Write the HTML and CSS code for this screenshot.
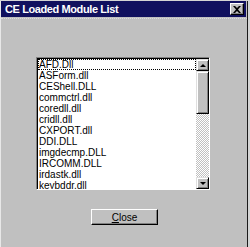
FILE: index.html
```html
<!DOCTYPE html>
<html>
<head>
    <meta charset="UTF-8">
    <link rel="stylesheet" href="styles.css">
</head>
<body>
    <div class="window">
        <div class="titlebar">
            <span class="title">CE Loaded Module List</span>
            <button class="close-box">
                <svg viewBox="0 0 8 7" width="8" height="7">
                    <path d="M0 0h2l2 2 2-2h2L5 3.5 8 7H6L4 5 2 7H0l3-3.5z" fill="#000"/>
                </svg>
            </button>
        </div>

        <div class="content">
            <div class="listbox">
                <div class="items">
                    <div class="item focused">AFD.Dll</div>
                    <div class="item">ASForm.dll</div>
                    <div class="item">CEShell.DLL</div>
                    <div class="item">commctrl.dll</div>
                    <div class="item">coredll.dll</div>
                    <div class="item">cridll.dll</div>
                    <div class="item">CXPORT.dll</div>
                    <div class="item">DDI.DLL</div>
                    <div class="item">imgdecmp.DLL</div>
                    <div class="item">IRCOMM.DLL</div>
                    <div class="item">irdastk.dll</div>
                    <div class="item">keybddr.dll</div>
                </div>
                <div class="scrollbar">
                    <div class="sb-btn"><span class="arrow-up"></span></div>
                    <div class="sb-thumb"></div>
                    <div class="sb-track"></div>
                    <div class="sb-btn"><span class="arrow-down"></span></div>
                </div>
            </div>

            <button class="button"><u>C</u>lose</button>
        </div>
    </div>
</body>
</html>
```

FILE: styles.css
```css
body {
    margin: 0;
    width: 250px;
    height: 247px;
    overflow: hidden;
    background: #d4d4d4;
    font-family: "Liberation Sans", Arial, sans-serif;
    color: #000;
}

.window {
    width: 248px;
    height: 247px;
    box-sizing: border-box;
    background: #c0c0c0;
    border-left: 1px solid #e8e8e8;
    border-right: 1px solid #1a1a1a;
}

.titlebar {
    height: 16px;
    margin: 1px 1px 0 0;
    padding: 0 2px 0 4px;
    background: #10105e;
    display: flex;
    align-items: center;
    justify-content: space-between;
}

.title {
    color: #fff;
    font-size: 11px;
    font-weight: bold;
    letter-spacing: -0.4px;
}

.close-box {
    width: 14px;
    height: 12px;
    padding: 0;
    background: #c0c0c0;
    border: 1px solid;
    border-color: #fff #000 #000 #fff;
    box-shadow: inset -1px -1px #808080;
    display: flex;
    align-items: center;
    justify-content: center;
}

.content {
    margin-top: 1px;
    border-top: 1px dotted #dcdcdc;
    padding: 38px 0 0 35px;
}

.listbox {
    width: 174px;
    height: 133px;
    box-sizing: border-box;
    border: 1px solid;
    border-color: #808080 #fff #fff #808080;
    display: flex;
}

.items {
    flex: 1;
    background: #fff;
    border-top: 1px solid #000;
    border-left: 1px solid #000;
    overflow: hidden;
}

.item {
    height: 11px;
    line-height: 11px;
    font-size: 10px;
    padding-left: 1px;
    white-space: nowrap;
}

.item.focused {
    outline: 1px dotted #000;
    outline-offset: -1px;
}

.scrollbar {
    width: 13px;
    display: flex;
    flex-direction: column;
    border-top: 1px solid #000;
}

.sb-btn,
.sb-thumb {
    box-sizing: border-box;
    background: #c0c0c0;
    border: 1px solid;
    border-color: #dfdfdf #000 #000 #dfdfdf;
    box-shadow: inset 1px 1px #fff, inset -1px -1px #808080;
}

.sb-btn {
    height: 12px;
    display: flex;
    align-items: center;
    justify-content: center;
}

.sb-thumb {
    height: 43px;
}

.sb-track {
    flex: 1;
    background: repeating-conic-gradient(#c0c0c0 0 25%, #fff 0 50%) 0 0 / 2px 2px;
}

.arrow-up {
    width: 0;
    height: 0;
    border-left: 3px solid transparent;
    border-right: 3px solid transparent;
    border-bottom: 3px solid #000;
}

.arrow-down {
    width: 0;
    height: 0;
    border-left: 3px solid transparent;
    border-right: 3px solid transparent;
    border-top: 3px solid #000;
}

.button {
    display: block;
    width: 67px;
    height: 16px;
    margin: 19px 0 0 55px;
    padding: 0;
    box-sizing: border-box;
    background: #c0c0c0;
    border: 1px solid;
    border-color: #fff #000 #000 #fff;
    box-shadow: inset -1px -1px #808080;
    font-family: inherit;
    font-size: 10px;
    color: #000;
}
```
